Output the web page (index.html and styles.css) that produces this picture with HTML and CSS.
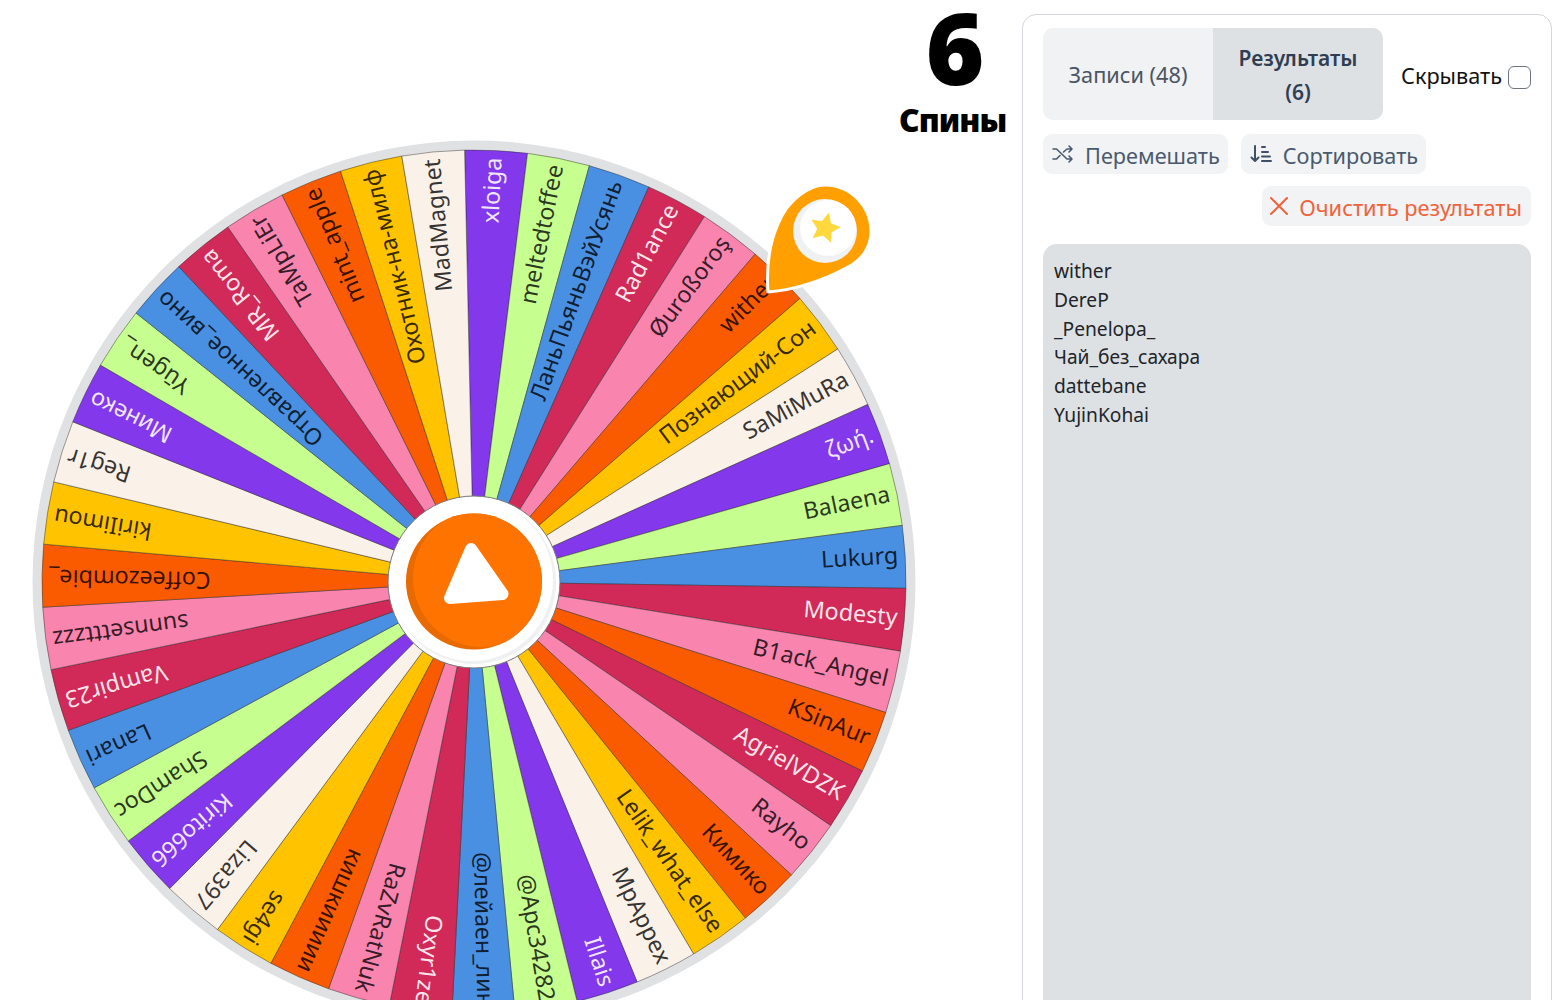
FILE: index.html
```html
<!DOCTYPE html>
<html lang="ru">
<head>
    <meta charset="UTF-8">
    <title>Колесо имён</title>
    <link rel="stylesheet" href="styles.css">
</head>
<body>
    <div class="app">
        <div class="stage">
            <div class="counter">
                <div class="counter-num">6</div>
                <div class="counter-label">Спины</div>
            </div>
            <svg id="wheel" class="wheel" viewBox="-442 -442 884 884" width="884" height="884">
                <defs>
                    <clipPath id="hub-clip"><circle cy="-0.5" r="68"></circle></clipPath>
                </defs>
                <circle class="wheel-rim" r="441.5"></circle>
                <g id="wedges"></g>
                <g id="labels"></g>
                <circle class="hub-ring" r="86"></circle>
                <circle class="hub-shade" r="82"></circle>
                <circle class="hub-plate" cx="-2" cy="-2" r="81"></circle>
                <circle class="hub-dark" cy="-0.5" r="68"></circle>
                <circle class="hub-face" cx="8" cy="-4" r="69" clip-path="url(#hub-clip)"></circle>
                <path class="hub-play" d="M-3 -33L28.500 12L-24 16Z"></path>
                <g transform="translate(294 -290)">
                    <path class="pin-body" d="M0 0C-2 -28 3 -52 10 -68C20 -93 42 -107 57 -107C83 -107 103 -85 103 -61C103 -42 91 -30 78 -24C58 -13 28 -2 0 0Z"></path>
                    <circle class="pin-shade" cx="57" cy="-61" r="32"></circle>
                    <circle class="pin-face" cx="60" cy="-64" r="28"></circle>
                    <path class="pin-star" transform="translate(57 -64) rotate(14)" d="M0 -16L4.700 -5.900L15.200 -4.900L7.400 2.500L9.400 12.900L0 7.700L-9.400 12.900L-7.400 2.500L-15.200 -4.900L-4.700 -5.900Z"></path>
                </g>
            </svg>
        </div>

        <div class="panel">
            <div class="panel-top">
                <div class="tabs">
                    <div class="tab">Записи (48)</div>
                    <div class="tab tab-active">Результаты (6)</div>
                </div>
                <label class="hide-toggle">Скрывать <input type="checkbox" class="hide-check"></label>
            </div>
            <div class="actions">
                <button type="button" class="btn">
                    <svg class="icon" viewBox="0 0 24 24"><path d="M2 7h3.500L16 17h5M2 17h3.500l3.500-3.500M12.500 10l3.500-3h5M18 4l3 3-3 3M18 14l3 3-3 3"></path></svg>
                    <span class="btn-text">Перемешать</span>
                </button>
                <button type="button" class="btn">
                    <svg class="icon icon-bold" viewBox="0 0 24 24"><path d="M6 4v15M2.500 15.500L6 19l3.500-3.500M13 5h3M13 10h6M13 14.500h8M13 19h9"></path></svg>
                    <span class="btn-text">Сортировать</span>
                </button>
            </div>
            <div class="actions actions-end">
                <button type="button" class="btn btn-danger">
                    <svg class="icon icon-close" viewBox="0 0 18 18"><path d="M1 1l16 16M17 1L1 17"></path></svg>
                    <span class="btn-text">Очистить результаты</span>
                </button>
            </div>
            <div class="results">
                <div>wither</div>
                <div>DereP</div>
                <div>_Penelopa_</div>
                <div>Чай_без_сахара</div>
                <div>dattebane</div>
                <div>YujinKohai</div>
            </div>
        </div>
    </div>

    <script>
        const names = ['xloiga', 'meltedtoffee', 'ЛаньПьяньВэйУсянь', 'Rad1ance', 'Øuroßoroş', 'wither',
            'Познающий-Сон', 'SaMiMuRa', 'ζωή.', 'Balaena', 'Lukurg', 'Modesty', 'B1ack_Angel', 'KSinAur',
            'AgrielVDZK', 'Rayho', 'Кимико', 'Lelik_what_else', 'MpAppex', 'Illais', '@Apc34282',
            '@лейаен_лин', 'Oxyr1ze', 'RaZvRatNuk', 'кишкиииии', 'se4gi', 'Liza397', 'Kirito666', 'ShamDoc',
            'Lanari', 'Vampir23', 'sunnsetttzzz', 'Coffeezombie_', 'kiriIimou', 'Reg1r', 'Минеко', 'Yūgen_',
            'Отравленное_вино', 'MR_Roma', 'TaMpLiEr', 'mint_apple', 'Охотник-на-милф', 'MadMagnet'];
        const colors = ['purple', 'green', 'blue', 'crimson', 'pink', 'orange', 'yellow', 'cream'];
        const NS = 'http://www.w3.org/2000/svg';
        const R = 432;
        const START = -1.25;
        const STEP = 360 / names.length;

        function point(deg, r) {
            const a = deg * Math.PI / 180;
            return (r * Math.sin(a)).toFixed(2) + ' ' + (-r * Math.cos(a)).toFixed(2);
        }

        names.forEach(function(name, i) {
            // the colour cycle skips ahead after KSinAur
            const color = colors[(i < 14 ? i : i + 5) % 8];
            const from = START + STEP * i;

            const wedge = document.createElementNS(NS, 'path');
            wedge.setAttribute('d', 'M0 0L' + point(from, R) + 'A' + R + ' ' + R + ' 0 0 1 ' + point(from + STEP, R) + 'Z');
            wedge.setAttribute('class', 'wedge wedge-' + color);
            document.getElementById('wedges').appendChild(wedge);

            const label = document.createElementNS(NS, 'text');
            label.textContent = name;
            label.setAttribute('x', 425);
            label.setAttribute('y', -3);
            label.setAttribute('transform', 'rotate(' + (from + STEP / 2 - 90).toFixed(2) + ')');
            label.setAttribute('class', 'label label-' + color);
            document.getElementById('labels').appendChild(label);
        });
    </script>
</body>
</html>
```

FILE: styles.css
```css
* {
    box-sizing: border-box;
}

html, body {
    height: 100%;
    margin: 0;
    overflow: hidden;
}

body {
    background: #fff;
    color: #212529;
    font-family: "Noto Sans", "Open Sans", sans-serif;
}

.app {
    display: flex;
    height: 1000px;
}

.stage {
    display: flex;
    flex-direction: column;
    width: 1022px;
    flex-shrink: 0;
}

.counter {
    align-self: flex-end;
    height: 140px;
    width: 123px;
    padding-right: 20px;
    text-align: center;
    font-weight: 900;
    color: #000;
}

.counter-num {
    padding-left: 9px;
    font-size: 100px;
    line-height: 92px;
}

.counter-label {
    margin-top: 6px;
    font-size: 32px;
    line-height: 44px;
    letter-spacing: -1px;
}

.wheel {
    display: block;
    margin-left: 32px;
    flex-shrink: 0;
}

.wheel-rim {
    fill: #dfe1e3;
}

.wedge {
    stroke: rgba(40, 40, 40, 0.45);
    stroke-width: 1;
}

.wedge-purple { fill: #8338ec; }
.wedge-green { fill: #c6ff8f; }
.wedge-blue { fill: #4a90e2; }
.wedge-crimson { fill: #d12a58; }
.wedge-pink { fill: #f984ae; }
.wedge-orange { fill: #fb5b00; }
.wedge-yellow { fill: #ffc300; }
.wedge-cream { fill: #faf1e8; }

.label {
    font-family: "Noto Sans", "Open Sans", sans-serif;
    font-size: 23.3px;
    text-anchor: end;
    dominant-baseline: central;
    fill: #000;
    fill-opacity: 0.8;
}

.label-purple, .label-crimson {
    fill: #fff;
    fill-opacity: 0.9;
}

.hub-ring {
    fill: #fff;
    stroke: #777;
    stroke-width: 1;
}

.hub-shade {
    fill: #eff0f1;
}

.hub-plate {
    fill: #fff;
}

.hub-dark {
    fill: #e86a00;
}

.hub-face {
    fill: #ff7300;
}

.hub-play {
    fill: #fff;
    stroke: #fff;
    stroke-width: 12;
    stroke-linejoin: round;
}

.pin-body {
    fill: #ff9f00;
    stroke: #fff;
    stroke-width: 3;
    stroke-linejoin: round;
}

.pin-shade {
    fill: #f0f1f3;
}

.pin-face {
    fill: #fff;
}

.pin-star {
    fill: #ffd83d;
}

.panel {
    flex: 1;
    margin: 14px 8px -40px 0;
    padding: 13px 20px;
    border: 1px solid #d3d7db;
    border-radius: 14px;
    font-size: 21.7px;
}

.panel-top {
    display: flex;
    align-items: center;
}

.tabs {
    display: flex;
    width: 340px;
    border-radius: 10px;
    overflow: hidden;
    flex-shrink: 0;
}

.tab {
    display: flex;
    align-items: center;
    justify-content: center;
    width: 170px;
    height: 92px;
    padding: 2px 24px 0;
    background: #f0f2f4;
    color: #4b5563;
    text-align: center;
    line-height: 34px;
}

.tab-active {
    background: #dee1e4;
    color: #2f3e52;
    font-size: 21px;
    font-weight: 600;
}

.hide-toggle {
    display: flex;
    align-items: center;
    gap: 6px;
    margin-left: 18px;
    padding-top: 2px;
    color: #111;
    white-space: nowrap;
}

.hide-check {
    appearance: none;
    width: 23px;
    height: 23px;
    margin: 5px 0 0;
    border: 1px solid #6c757d;
    border-radius: 6px;
    background: #fff;
}

.actions {
    display: flex;
    gap: 13px;
    margin-top: 14px;
}

.actions-end {
    justify-content: flex-end;
    margin-top: 12px;
}

.btn {
    display: flex;
    align-items: center;
    gap: 10px;
    height: 40px;
    padding: 0 8px;
    border: 0;
    border-radius: 9px;
    background: #f1f3f5;
    color: #4a5a6e;
    font: inherit;
}

.btn-text {
    padding-top: 3px;
}

.btn-danger {
    gap: 11px;
    padding-right: 9px;
    color: #f0623a;
    font-size: 21.8px;
}

.icon {
    width: 24px;
    height: 24px;
    fill: none;
    stroke: currentColor;
    stroke-width: 1.6;
    stroke-linecap: round;
    stroke-linejoin: round;
}

.icon-bold {
    stroke: #3f4f66;
    stroke-width: 2;
}

.icon-close {
    width: 18px;
    height: 18px;
    stroke-width: 2;
}

.results {
    height: 800px;
    margin-top: 18px;
    padding: 13px 11px;
    border-radius: 14px;
    background: #dee1e4;
    color: #212529;
    font-size: 19.2px;
    line-height: 28.8px;
}
```
